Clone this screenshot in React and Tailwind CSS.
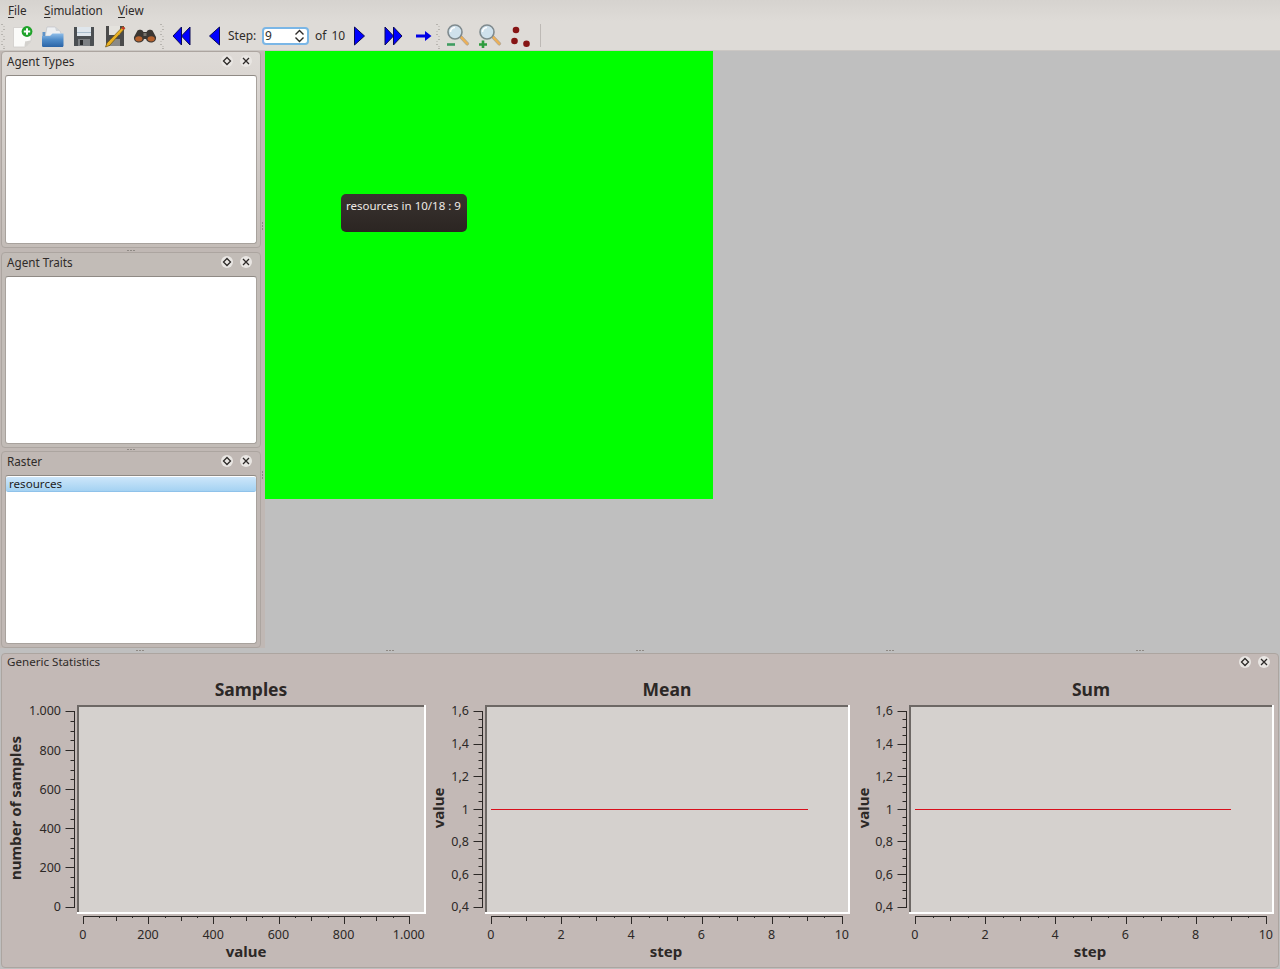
import React from "react";

const Handle = () => (
  <svg width="5" height="26" viewBox="0 0 5 26" className="shrink-0">
    {[1, 6, 11, 16, 21, 25].map((y, i) => (
      <g key={i} fill="#8f8a85">
        <rect x={i % 2 ? 2.5 : 0.5} y={y} width="1" height="1" />
        <rect x={i % 2 ? 0.5 : 2.5} y={y + 2} width="1" height="1" fill="#b5b0aa" />
      </g>
    ))}
  </svg>
);

const Btn = ({ w, children }) => (
  <div className="flex h-full shrink-0 items-center justify-center" style={{ width: w }}>
    {children}
  </div>
);

const NewIcon = () => (
  <svg width="24" height="24" viewBox="0 0 24 24">
    <path d="M3.500 3.500h14l3.500 5v8c-1 3-4 5-6.500 6.500H3.500z" fill="#fbfbf9" stroke="#cfcdc9" strokeWidth="0.8" />
    <path d="M14.500 23c0-2 .5-5 1-6 1.500.5 4-.2 5.500-1-.5 3-4 6-6.500 7z" fill="#d3d1cd" />
    <circle cx="17" cy="7.500" r="5.400" fill="#1fa32a" />
    <path d="M17 4.300v6.400M13.800 7.500h6.400" stroke="#fff" strokeWidth="2" />
  </svg>
);
const OpenIcon = () => (
  <svg width="24" height="24" viewBox="0 0 24 24">
    <defs>
      <linearGradient id="folderGrad" x1="0" y1="0" x2="0" y2="1">
        <stop offset="0" stopColor="#8fbde8" />
        <stop offset="0.45" stopColor="#4f8cc9" />
        <stop offset="1" stopColor="#2a64a6" />
      </linearGradient>
    </defs>
    <path d="M1.500 12V8h3v4z" fill="#5f93c8" />
    <path d="M4.500 11L6 3h8l5 4 2 5H4.500z" fill="#eef0f2" stroke="#b9bdc2" strokeWidth="0.6" />
    <path d="M14 3l1 4h4z" fill="#cfd3d7" />
    <path d="M1 12h8l2.500-2.500H22.500V21.500c0 .8-.5 1.500-1.200 1.500H2.200C1.500 23 1 22.300 1 21.500z" fill="url(#folderGrad)" />
  </svg>
);
const SaveIcon = () => (
  <svg width="22" height="22" viewBox="0 0 22 22">
    <path d="M1 2h20v18.500l-.5.5H1z" fill="#4b4f52" />
    <rect x="4" y="2" width="14" height="9" fill="#dfe6ec" />
    <rect x="4" y="7" width="14" height="1" fill="#a9bccb" />
    <rect x="5" y="14" width="12" height="7" fill="#7d8083" />
    <rect x="7" y="15" width="3" height="5" fill="#2a2c2e" />
  </svg>
);
const SaveAsIcon = () => (
  <svg width="24" height="24" viewBox="0 0 24 24">
    <path d="M3 2h18v20H3z" fill="#4b4b4b" />
    <rect x="6" y="2" width="11" height="9" fill="#e4e2dd" />
    <rect x="7" y="15" width="10" height="7" fill="#8a8a88" />
    <path d="M20 2.500l2 1.700L6.500 21.500l-4 1.500 1.500-4z" fill="#eab223" stroke="#6f5310" strokeWidth="0.7" />
    <path d="M20 2.500l2 1.700-1.500 1.700-2-1.700z" fill="#c8322a" />
  </svg>
);
const BinoIcon = () => (
  <svg width="24" height="14" viewBox="0 0 24 14">
    <path d="M4.500 1.500C5.500.500 8.500.500 9.500 1.500L10.500 3h3l1-1.500c1-1 4-1 5 0L23 8c.5 3-1.500 5.500-5 5.500-2.500 0-4.500-1.500-5-3.500h-2c-.5 2-2.500 3.500-5 3.500-3.500 0-5.500-2.500-5-5.500z" fill="#3b3733" />
    <ellipse cx="5.800" cy="9.800" rx="3.600" ry="2.600" fill="#b5622e" />
    <ellipse cx="18.200" cy="9.800" rx="3.600" ry="2.600" fill="#b5622e" />
    <rect x="10.500" y="4" width="3" height="3" fill="#77736c" />
  </svg>
);
const Tri = ({ d, w, h }) => (
  <svg width={w} height={h} viewBox={`0 0 ${w} ${h}`}>
    <path d={d} fill="#0000ff" stroke="#0b0b55" strokeWidth="1" strokeLinejoin="round" />
  </svg>
);
const Magnifier = ({ plus }) => (
  <svg width="24" height="24" viewBox="0 0 24 24">
    <path d="M13.500 13.500l2-2 7 7.500c.8 1-.8 2.800-2 2z" fill="#eeb054" stroke="#a9a196" strokeWidth="0.8" />
    <circle cx="9" cy="8" r="7" fill="#cfe1ec" stroke="#7f8a8e" strokeWidth="1.600" />
    <path d="M4.500 8a4.500 4.500 0 0 1 4.500-4.500" stroke="#fff" strokeWidth="1.500" fill="none" />
    {plus ? (
      <path d="M1 20.500h8M5 16.500v7.500" stroke="#2f9c3f" strokeWidth="2.600" />
    ) : (
      <path d="M1 20.500h8" stroke="#3f9c60" strokeWidth="2.600" />
    )}
  </svg>
);
const DotsIcon = () => (
  <svg width="22" height="24" viewBox="0 0 22 24">
    <circle cx="6" cy="6" r="3.300" fill="#861414" />
    <circle cx="4.500" cy="17" r="3.300" fill="#861414" />
    <circle cx="16.500" cy="19.700" r="3.300" fill="#861414" />
  </svg>
);

const SmallBtn = ({ kind }) => (
  <span className="flex h-[12px] w-[12px] items-center justify-center rounded-full bg-[#e9e6e3]">
    <svg width="10" height="10" viewBox="0 0 10 10">
      {kind === "float" ? (
        <path d="M5 1.500L8.500 5 5 8.500 1.500 5z" fill="none" stroke="#2d2a28" strokeWidth="1.300" />
      ) : (
        <path d="M2 2l6 6M8 2l-6 6" stroke="#2d2a28" strokeWidth="1.300" />
      )}
    </svg>
  </span>
);

const Grip = () => (
  <div className="flex justify-center gap-[1px]">
    <span className="h-[1px] w-[2px] bg-[#8f8a85]" />
    <span className="h-[1px] w-[2px] bg-[#8f8a85]" />
    <span className="h-[1px] w-[2px] bg-[#8f8a85]" />
  </div>
);

const VGrip = () => (
  <div className="flex flex-col items-center gap-[1px]">
    <span className="h-[2px] w-[1px] bg-[#8f8a85]" />
    <span className="h-[2px] w-[1px] bg-[#8f8a85]" />
    <span className="h-[2px] w-[1px] bg-[#8f8a85]" />
  </div>
);

const Dock = ({ title, h, bg, children }) => (
  <div
    className={`flex shrink-0 flex-col rounded-[4px] border border-[#aca5a0] px-[3px] pb-[3px] ${bg}`}
    style={{ height: h }}
  >
    <div className="flex h-[23px] shrink-0 items-start justify-between pl-[2px] pr-[5px] pt-[1px] text-[11.7px] leading-[16px] text-[#2f2b29]">
      <span>{title}</span>
      <span className="mt-[2px] flex gap-[7px]">
        <SmallBtn kind="float" />
        <SmallBtn kind="close" />
      </span>
    </div>
    <div className="min-h-0 flex-1 rounded-[3px] border border-[#a8a29d] border-t-[#8f8a85] bg-white">{children}</div>
  </div>
);

const TEXT = "#2c2826";

function Chart({ x0, width, plot, title, titleX, xLabel, xLabelX, yLabel, yLabelX, yTicks, xTicks, yMinor, xAxis, yAxisX, labelRight, line }) {
  const [px1, px2] = plot;
  const xMajorStep = (xAxis[1] - xAxis[0]) / (xTicks.length - 1);
  const xMarks = [];
  for (let i = 0; i <= (xTicks.length - 1) * 4; i++) {
    const x = xAxis[0] + (i * xMajorStep) / 4;
    xMarks.push([x, i % 4 === 0 ? 9 : i % 2 === 0 ? 6 : 3]);
  }
  const yTop = 711;
  const yBottom = 906.500;
  const yStep = (yBottom - yTop) / (yTicks.length - 1);
  const yMarks = [];
  for (let i = 0; i <= (yTicks.length - 1) * yMinor; i++) {
    const y = yTop + (i * yStep) / yMinor;
    yMarks.push([y, i % yMinor === 0 ? 9 : 4]);
  }
  return (
    <svg width={width} height="291" viewBox={`${x0} 675 ${width} 291`} className="shrink-0 overflow-visible" style={{ fontFamily: '"Noto Sans", sans-serif' }}>
      <rect x={px1} y="705" width={px2 - px1} height="209" fill="#d5d1ce" />
      <rect x={px1} y="705" width={px2 - px1} height="2" fill="#6d6865" />
      <rect x={px1} y="705" width="2" height="209" fill="#6d6865" />
      <rect x={px2 - 2} y="705" width="2" height="209" fill="#fff" />
      <rect x={px1} y="912" width={px2 - px1} height="2" fill="#fff" />
      <text x={titleX} y="695.500" textAnchor="middle" fontSize="17.500" fontWeight="700" fill={TEXT}>{title}</text>
      <text x={xLabelX} y="957" textAnchor="middle" fontSize="15" fontWeight="700" fill={TEXT}>{xLabel}</text>
      <text transform={`translate(${yLabelX} 808) rotate(-90)`} textAnchor="middle" fontSize="15" fontWeight="700" fill={TEXT}>{yLabel}</text>
      <path d={`M${yAxisX - 0.5} 711V907`} stroke="#2c2826" fill="none" />
      {yMarks.map(([y, l], i) => (
        <path key={i} d={`M${yAxisX - 0.5 - l} ${Math.round(y) + 0.5}H${yAxisX}`} stroke="#2c2826" fill="none" />
      ))}
      {yTicks.map((t, i) => (
        <text key={t} x={labelRight} y={i === 0 ? 715 : yTop + i * yStep + 4.900} textAnchor="end" fontSize="12.500" fill={TEXT}>{t}</text>
      ))}
      <path d={`M${xAxis[0]} 916.500H${xAxis[1]}`} stroke="#2c2826" fill="none" />
      {xMarks.map(([x, l], i) => (
        <path key={i} d={`M${Math.round(x) + 0.5} 916V${917 + l - 2}`} stroke="#2c2826" fill="none" />
      ))}
      {xTicks.map((t, i) => (
        <text key={t} x={xAxis[0] + i * xMajorStep - 0.2} y="939" textAnchor="middle" fontSize="12.500" fill={TEXT}>{t}</text>
      ))}
      {line && <path d={`M${line[0]} 809.500H${line[1]}`} stroke="#d8101c" fill="none" />}
    </svg>
  );
}

export default function App() {
  return (
    <div className="flex h-[969px] w-[1280px] flex-col overflow-hidden bg-[#bfbfbf] text-[12px] text-[#2f2b29]" style={{ fontFamily: '"Noto Sans", sans-serif' }}>
      <div className="h-[21px] shrink-0 bg-gradient-to-b from-[#d6d3cf] to-[#dedbd7]">
        <div className="flex h-full items-center pl-[8px] text-[11.7px] leading-none">
          <span className="w-[36px]"><u className="underline-offset-2">F</u>ile</span>
          <span className="w-[74px]"><u className="underline-offset-2">S</u>imulation</span>
          <span><u className="underline-offset-2">V</u>iew</span>
        </div>
      </div>
      <div className="flex h-[30px] shrink-0 items-center border-b border-[#cbc7c3] bg-[#dedbd7] pl-[1px]">
        <Handle />
        <Btn w={31}><NewIcon /></Btn>
        <Btn w={31}><OpenIcon /></Btn>
        <Btn w={31}><SaveIcon /></Btn>
        <Btn w={31}><SaveAsIcon /></Btn>
        <Btn w={30}><BinoIcon /></Btn>
        <Handle />
        <Btn w={33}><Tri w={19} h={20} d="M9.500 1v18L1 10zM18 1v18L9.500 10z" /></Btn>
        <Btn w={32}><Tri w={13} h={20} d="M11.500 1v18L1.500 10z" /></Btn>
        <span className="-ml-[2px] w-[34px] shrink-0">Step:</span>
        <div className="flex h-[18px] w-[47px] shrink-0 items-center justify-between rounded-[4px] border-2 border-[#7ab6e6] bg-white pl-[1px] pr-[2px]">
          <span className="leading-none">9</span>
          <svg width="11" height="14" viewBox="0 0 11 14">
            <path d="M1.500 5.500L5.500 1.500 9.500 5.500M1.500 8.500L5.500 12.500 9.500 8.500" fill="none" stroke="#2d2a28" strokeWidth="1.400" />
          </svg>
        </div>
        <span className="ml-[6px] w-[30px] shrink-0 whitespace-nowrap [word-spacing:2px]">of 10</span>
        <Btn w={29}><Tri w={13} h={20} d="M1.500 1v18L11.500 10z" /></Btn>
        <Btn w={38}><Tri w={19} h={20} d="M1 1v18L9.500 10zM9.500 1v18L18 10z" /></Btn>
        <Btn w={24}>
          <svg width="16" height="12" viewBox="0 0 16 12">
            <path d="M0 4.500h9V1l6.500 5L9 11V7.500H0z" fill="#0000e6" />
          </svg>
        </Btn>
        <Handle />
        <Btn w={33}><Magnifier /></Btn>
        <Btn w={31}><Magnifier plus /></Btn>
        <Btn w={31}><DotsIcon /></Btn>
        <div className="ml-[4px] h-[23px] w-[1px] bg-[#bdb9b5]" />
      </div>

      <div className="flex min-h-0 flex-1">
        <div className="flex w-[265px] shrink-0 bg-[#c0b8b4] pl-[1px]">
          <div className="flex w-[260px] shrink-0 flex-col">
            <Dock title="Agent Types" h={197} bg="bg-gradient-to-b from-[#dedad6] to-[#c4bdb8]" />
            <div className="flex h-[4px] items-center justify-center"><Grip /></div>
            <Dock title="Agent Traits" h={196} bg="bg-[#c2bcb7]" />
            <div className="flex h-[3px] items-center justify-center"><Grip /></div>
            <Dock title="Raster" h={197} bg="bg-[#c0b8b4]">
              <div className="mt-[1px] h-[15px] rounded-[2px] border-b border-[#8fc2ea] bg-gradient-to-b from-[#cde6fa] to-[#a4d2f2] pl-[3px] text-[11.6px] leading-[14px] text-[#1d1d1d]">
                resources
              </div>
            </Dock>
          </div>
          <div className="flex w-[3px] flex-col items-center gap-[241px] pt-[171px]">
            <VGrip />
            <VGrip />
          </div>
        </div>
        <div className="relative min-w-0 flex-1 bg-[#bfbfbf]">
          <div className="h-[448px] w-[448px] bg-[#00ff00]" />
          <div className="absolute left-[76px] top-[143px] h-[38px] w-[126px] rounded-[5px] bg-gradient-to-b from-[#3a3330] to-[#2b2522] pl-[5px] pt-[4px] text-[11.500px] leading-[16px] text-[#efeae6]">
            resources in 10/18 : 9
          </div>
        </div>
      </div>

      <div className="flex h-[5px] shrink-0 items-center pl-[15px]">
        {[0, 1, 2, 3, 4].map((i) => (
          <div key={i} className="w-[250px]"><Grip /></div>
        ))}
      </div>

      <div className="mx-[1px] mb-[1px] flex h-[315px] shrink-0 flex-col rounded-[4px] border border-[#aca5a0] bg-[#c3b9b6]">
        <div className="flex h-[21px] shrink-0 items-start justify-between pl-[5px] pr-[8px] text-[11.600px] leading-[16px]">
          <span>Generic Statistics</span>
          <span className="mt-[2px] flex gap-[7px]">
            <SmallBtn kind="float" />
            <SmallBtn kind="close" />
          </span>
        </div>
        <div className="flex pl-0">
          <Chart x0={2} width={428} plot={[77, 426]} title="Samples" titleX={251} xLabel="value" xLabelX={246} yLabel="number of samples" yLabelX={21} yTicks={["1.000", "800", "600", "400", "200", "0"]} yMinor={4} xTicks={["0", "200", "400", "600", "800", "1.000"]} xAxis={[83, 409]} yAxisX={75} labelRight={61} />
          <Chart x0={430} width={424} plot={[485, 850]} title="Mean" titleX={667} xLabel="step" xLabelX={666} yLabel="value" yLabelX={444} yTicks={["1,6", "1,4", "1,2", "1", "0,8", "0,6", "0,4"]} yMinor={4} xTicks={["0", "2", "4", "6", "8", "10"]} xAxis={[491, 842]} yAxisX={483} labelRight={469} line={[491, 808]} />
          <Chart x0={854} width={424} plot={[909, 1274]} title="Sum" titleX={1091} xLabel="step" xLabelX={1090} yLabel="value" yLabelX={869} yTicks={["1,6", "1,4", "1,2", "1", "0,8", "0,6", "0,4"]} yMinor={4} xTicks={["0", "2", "4", "6", "8", "10"]} xAxis={[915, 1266]} yAxisX={907} labelRight={893} line={[915, 1231]} />
        </div>
      </div>
    </div>
  );
}
